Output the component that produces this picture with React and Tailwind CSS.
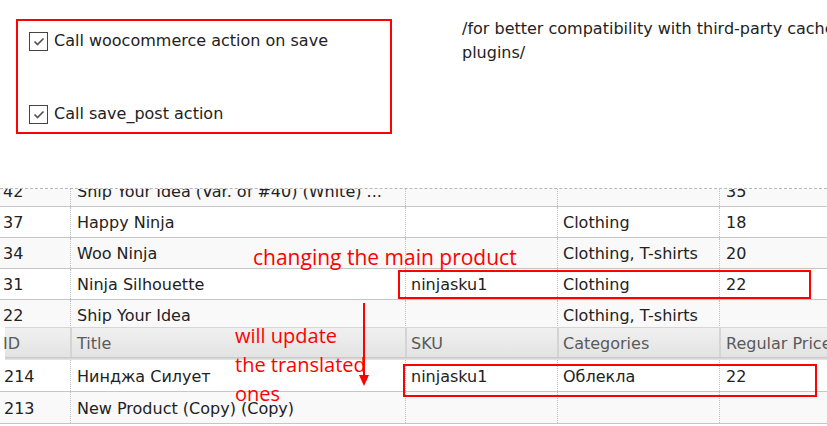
import React from "react";

const FONT = { fontFamily: '"DejaVu Sans", Verdana, sans-serif' };
const ANN = { fontFamily: '"Open Sans", Lato, sans-serif' };

function Check() {
  return (
    <span className="inline-flex w-[19px] h-[19px] border border-[#444] bg-white items-center justify-center shrink-0">
      <svg width="14" height="14" viewBox="0 0 14 14">
        <path d="M2.5 7.5 L5.5 10.5 L11.5 4.5" fill="none" stroke="#555" strokeWidth="1.7" />
      </svg>
    </span>
  );
}

function Row({ cells, bg, idPad = "pl-[3px]", h = "h-[31px]", pt = "pt-[2px]" }) {
  const cell = `flex items-center ${pt} border-l border-dotted border-[#bdbdbd] whitespace-nowrap overflow-hidden`;
  return (
    <div className={`grid grid-cols-[70px_335px_152px_162px_1fr] ${h} ${bg} border-b border-[#c6c6c6] text-[16px] text-[#222]`}>
      <div className={`${idPad} flex items-center ${pt} whitespace-nowrap overflow-hidden`}>{cells[0]}</div>
      <div className={`pl-[6px] ${cell}`}>{cells[1]}</div>
      <div className={`pl-[5px] ${cell}`}>{cells[2]}</div>
      <div className={`pl-[5px] ${cell}`}>{cells[3]}</div>
      <div className={`pl-[6px] ${cell}`}>{cells[4]}</div>
    </div>
  );
}

export default function App() {
  return (
    <div className="relative w-[827px] h-[426px] overflow-hidden bg-white" style={FONT}>
      {/* top section */}
      <div className="h-[188px] flex">
        <div className="ml-[16px] mt-[19px] w-[376px] h-[115px] border-2 border-[#ff0000] pl-[11px] pt-[10px] flex flex-col gap-[53px] shrink-0">
          <label className="flex items-center gap-[6px] text-[16px] text-[#222] h-[20px] whitespace-nowrap">
            <Check />
            <span>Call woocommerce action on save</span>
          </label>
          <label className="flex items-center gap-[6px] text-[16px] text-[#222] h-[20px] whitespace-nowrap">
            <Check />
            <span>Call save_post action</span>
          </label>
        </div>
        <div className="ml-[70px] mt-[17px] text-[16px] leading-[24px] text-[#222] whitespace-nowrap">
          <div>/for better compatibility with third-party cache</div>
          <div>plugins/</div>
        </div>
      </div>

      {/* table */}
      <div className="border-t border-dashed border-[#b8b8b8]">
        <div className="h-[18px] overflow-hidden border-b border-[#c6c6c6]">
          <div className="-mt-[13px]">
            <Row bg="bg-[#f9f9f9]" cells={["42", "Ship Your Idea (Var. of #40) (White) ...", "", "", "35"]} />
          </div>
        </div>
        <Row bg="bg-white" cells={["37", "Happy Ninja", "", "Clothing", "18"]} />
        <Row bg="bg-[#f9f9f9]" cells={["34", "Woo Ninja", "", "Clothing, T-shirts", "20"]} />
        <Row bg="bg-white" cells={["31", "Ninja Silhouette", "ninjasku1", "Clothing", "22"]} />
        <div className="h-[27px] overflow-hidden">
          <Row bg="bg-[#f9f9f9]" cells={["22", "Ship Your Idea", "", "Clothing, T-shirts", ""]} />
        </div>

        {/* lower table */}
        <div className="flex">
          <div className="w-[5px] flex flex-col">
            <div className="h-[38px] bg-white" />
            <div className="flex-1 bg-[repeating-linear-gradient(to_bottom,#c8c8c8_0px,#c8c8c8_8px,transparent_8px,transparent_14px)]" />
          </div>
          <div className="flex-1">
            <div className="grid grid-cols-[65px_335px_152px_162px_1fr] h-[30px] bg-gradient-to-b from-[#f0f0f0] to-[#e3e3e3] border-t border-[#d6d6d6] text-[16px] text-[#5a5a5a]">
              <div className="flex items-center pt-[3px] whitespace-nowrap -ml-[2px]">ID</div>
              <div className="pl-[5px] flex items-center pt-[3px] border-l-2 border-[#d4d4d4]">Title</div>
              <div className="pl-[4px] flex items-center pt-[3px] border-l-2 border-[#d4d4d4]">SKU</div>
              <div className="pl-[4px] flex items-center pt-[3px] border-l-2 border-[#d4d4d4]">Categories</div>
              <div className="pl-[5px] flex items-center pt-[3px] border-l-2 border-[#d4d4d4] whitespace-nowrap overflow-hidden">Regular Price</div>
            </div>
            <div className="h-[3px] bg-gradient-to-b from-[#c4c4c4] to-[#e8e8e8]" />
            <div className="-ml-[5px]">
              <Row bg="bg-white" idPad="pl-[4px]" h="h-[32px]" pt="pt-[3px]" cells={["214", "Нинджа Силует", "ninjasku1", "Облекла", "22"]} />
              <Row bg="bg-[#f9f9f9]" idPad="pl-[4px]" h="h-[32px]" pt="pt-[3px]" cells={["213", "New Product (Copy) (Copy)", "", "", ""]} />
            </div>
          </div>
        </div>
      </div>

      {/* annotations */}
      <div className="absolute left-[398px] top-[270px] w-[413px] h-[29px] border-2 border-[#ff0000]" />
      <div className="absolute left-[403px] top-[364px] w-[414px] h-[33px] border-2 border-[#ff0000]" />
      <div className="absolute left-[253px] top-[243px] text-[21px] leading-[28px] text-[#ff0000] whitespace-nowrap" style={ANN}>
        changing the main product
      </div>
      <div className="absolute left-[235px] top-[321px] text-[20px] leading-[29px] text-[#ff0000] whitespace-nowrap" style={ANN}>
        <div>will update</div>
        <div>the translated</div>
        <div>ones</div>
      </div>
      <svg className="absolute left-[358px] top-[303px]" width="12" height="84" viewBox="0 0 12 84">
        <line x1="6" y1="0" x2="6" y2="74" stroke="#ff0000" strokeWidth="2" />
        <path d="M1 72 L11 72 L6 83 Z" fill="#ff0000" />
      </svg>
    </div>
  );
}
